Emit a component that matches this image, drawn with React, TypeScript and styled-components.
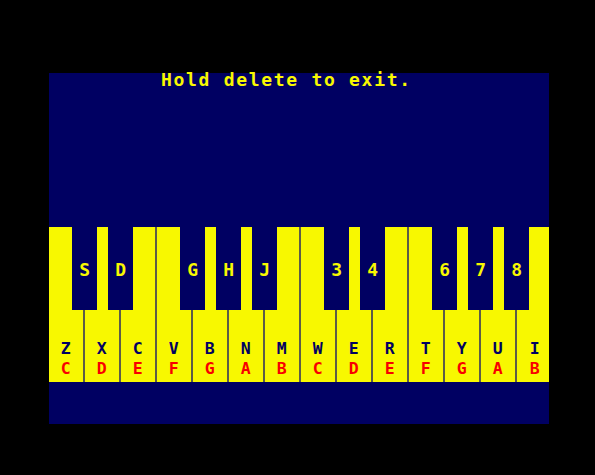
import React from "react";
import styled, { createGlobalStyle } from "styled-components";

const YELLOW = "#f8f800";
const NAVY = "#000062";
const RED = "#f80000";
const KEY_W = 36;

const GlobalStyle = createGlobalStyle`
  html, body {
    margin: 0;
    padding: 0;
    background: #000;
  }
  body {
    width: 595px;
    height: 475px;
    overflow: hidden;
    font-family: "DejaVu Sans Mono", "Liberation Mono", monospace;
  }
`;

interface WhiteKeyData {
  key: string;
  note: string;
}

interface BlackKeyData {
  key: string;
  at: number; // white-key boundary the black key sits on
}

const whiteKeys: WhiteKeyData[] = [
  { key: "Z", note: "C" },
  { key: "X", note: "D" },
  { key: "C", note: "E" },
  { key: "V", note: "F" },
  { key: "B", note: "G" },
  { key: "N", note: "A" },
  { key: "M", note: "B" },
  { key: "W", note: "C" },
  { key: "E", note: "D" },
  { key: "R", note: "E" },
  { key: "T", note: "F" },
  { key: "Y", note: "G" },
  { key: "U", note: "A" },
  { key: "I", note: "B" },
];

const blackKeys: BlackKeyData[] = [
  { key: "S", at: 1 },
  { key: "D", at: 2 },
  { key: "G", at: 4 },
  { key: "H", at: 5 },
  { key: "J", at: 6 },
  { key: "3", at: 8 },
  { key: "4", at: 9 },
  { key: "6", at: 11 },
  { key: "7", at: 12 },
  { key: "8", at: 13 },
];

function App(): JSX.Element {
  return (
    <Page>
      <GlobalStyle />
      <Screen>
        <Title>Hold delete to exit.</Title>
        <Keyboard>
          <WhiteRow>
            {whiteKeys.map((k, i) => (
              <WhiteKey key={i}>
                <KeyName>{k.key}</KeyName>
                <NoteName>{k.note}</NoteName>
              </WhiteKey>
            ))}
          </WhiteRow>
          {blackKeys.map((k) => (
            <BlackKey key={k.key} $left={k.at * KEY_W - 13}>
              {k.key}
            </BlackKey>
          ))}
        </Keyboard>
      </Screen>
    </Page>
  );
}

const Page = styled.div`
  padding: 73px 0 0 49px;
`;

const Screen = styled.div`
  width: 500px;
  height: 351px;
  background: ${NAVY};
  display: flex;
  flex-direction: column;
`;

const Label = styled.div`
  font-family: "DejaVu Sans Mono", "Liberation Mono", monospace;
  font-weight: bold;
  font-size: 18px;
  letter-spacing: 1.7px;
  white-space: pre;
`;

const Title = styled(Label)`
  color: ${YELLOW};
  line-height: 20px;
  height: 20px;
  margin-top: -3px;
  padding-left: 112px;
  margin-bottom: 137px;
`;

const Keyboard = styled.div`
  position: relative;
  height: 155px;
  overflow: hidden;
`;

const WhiteRow = styled.div`
  display: flex;
  height: 100%;
`;

const WhiteKey = styled.div`
  flex: 0 0 ${KEY_W}px;
  box-sizing: border-box;
  height: 100%;
  background: ${YELLOW};
  border-right: 2px solid #5c5c48;
  padding-top: 113px;
  display: flex;
  flex-direction: column;
  align-items: center;
  &:last-child {
    border-right: none;
  }
`;

const KeyName = styled(Label)`
  color: ${NAVY};
  font-size: 16.5px;
  letter-spacing: 2.6px;
  line-height: 18px;
  margin-left: 2px;
`;

const NoteName = styled(KeyName)`
  color: ${RED};
  margin-top: 1.5px;
`;

const BlackKey = styled(Label)<{ $left: number }>`
  position: absolute;
  top: 0;
  left: ${(p) => p.$left}px;
  width: 25px;
  height: 83px;
  box-sizing: border-box;
  background: ${NAVY};
  color: ${YELLOW};
  text-align: center;
  line-height: 14px;
  padding-top: 36px;
  padding-left: 2px;
`;

export default App;
